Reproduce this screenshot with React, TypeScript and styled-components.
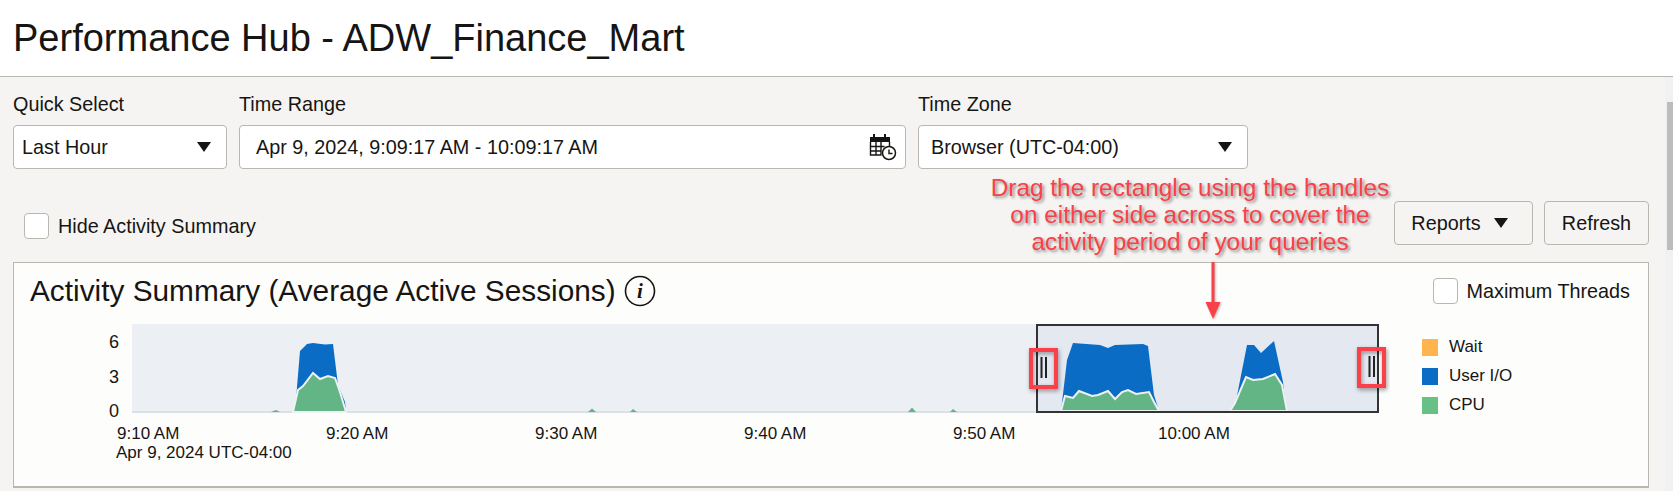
import styled, { createGlobalStyle } from 'styled-components';

const INK = '#161513';
const LINE = '#bab6b0';
const RED = '#fa4048';

const GlobalStyle = createGlobalStyle`
  html, body {
    margin: 0;
    padding: 0;
    background: #f5f4f2;
    font-family: "Liberation Sans", Arial, sans-serif;
    color: ${INK};
  }
`;

const Page = styled.div`
  width: 1673px;
  height: 491px;
  overflow: hidden;
  position: relative;
  background: #f5f4f2;
`;

const Header = styled.header`
  height: 77px;
  box-sizing: border-box;
  background: #fff;
  border-bottom: 1px solid ${LINE};
  padding: 14px 13px 0;
`;

const Title = styled.h1`
  margin: 0;
  font-size: 38px;
  line-height: 48px;
  font-weight: 400;
`;

const Body = styled.main`
  width: 1649px;
  padding: 15px 0 0 13px;
  box-sizing: border-box;
`;

const FilterRow = styled.div`
  display: flex;
  gap: 12px;
`;

const Field = styled.div<{ $width: number }>`
  width: ${p => p.$width}px;
`;

const FieldLabel = styled.label`
  display: block;
  font-size: 19.8px;
  line-height: 24px;
  margin-bottom: 9px;
`;

const InputBox = styled.div<{ $padLeft?: number; $padRight?: number }>`
  height: 44px;
  box-sizing: border-box;
  background: #fff;
  border: 1px solid ${LINE};
  border-radius: 4px;
  display: flex;
  align-items: center;
  justify-content: space-between;
  padding: 0 ${p => p.$padRight ?? 15}px 0 ${p => p.$padLeft ?? 8}px;
  font-size: 19.8px;
`;

const Caret = styled.span`
  width: 0;
  height: 0;
  flex: none;
  border-left: 7px solid transparent;
  border-right: 7px solid transparent;
  border-top: 10px solid ${INK};
`;

const ActionRow = styled.div`
  display: flex;
  align-items: center;
  margin-top: 32px;
  height: 44px;
`;

const CheckRow = styled.label`
  display: flex;
  align-items: center;
  gap: 9px;
  font-size: 19.8px;
  margin-left: 11px;
`;

const HideRow = styled(CheckRow)`
  margin-top: 6px;
`;

const CheckBox = styled.span`
  width: 25px;
  height: 26px;
  box-sizing: border-box;
  background: #fff;
  border: 1px solid ${LINE};
  border-radius: 4px;
  flex: none;
`;

const Actions = styled.div`
  display: flex;
  gap: 11px;
  margin-left: auto;
`;

const Button = styled.button<{ $width: number; $padRight?: number }>`
  width: ${p => p.$width}px;
  height: 44px;
  background: #f5f4f2;
  border: 1px solid ${LINE};
  border-radius: 4px;
  font: inherit;
  font-size: 19.8px;
  color: ${INK};
  display: flex;
  align-items: center;
  justify-content: center;
  gap: 13px;
  padding: 0 ${p => p.$padRight ?? 0}px 0 0;
`;

const Panel = styled.section`
  margin-top: 17px;
  height: 226px;
  box-sizing: border-box;
  background: #fdfdfb;
  border: 1px solid ${LINE};
  border-bottom-width: 2px;
  padding: 11px 18px 0 16px;
`;

const PanelHead = styled.div`
  display: flex;
  align-items: center;
  height: 34px;
  margin-bottom: 12px;
`;

const PanelTitle = styled.h2`
  margin: 0;
  font-size: 29.8px;
  font-weight: 400;
`;

const InfoIcon = styled.svg`
  margin-left: 8px;
  flex: none;
`;

const PanelOption = styled(CheckRow)`
  margin-left: auto;
`;

const ChartRow = styled.div`
  display: flex;
`;

const ChartSvg = styled.svg`
  display: block;
  margin-left: -30px;
  flex: none;
`;

const Legend = styled.ul`
  list-style: none;
  margin: 19px 0 0 32px;
  padding: 0;
  display: flex;
  flex-direction: column;
  gap: 13px;
`;

const LegendItem = styled.li`
  display: flex;
  align-items: center;
  gap: 11px;
  font-size: 17px;
  height: 16px;
`;

const Swatch = styled.span<{ $color: string }>`
  width: 16px;
  height: 17px;
  background: ${p => p.$color};
`;

const Callout = styled.div`
  position: absolute;
  left: 950px;
  top: 174px;
  width: 480px;
  text-align: center;
  color: ${RED};
  font-size: 24.4px;
  line-height: 27px;
  text-shadow: 2px 2px 3px rgba(0, 0, 0, 0.4);
`;

const CalloutArrow = styled.svg`
  position: absolute;
  left: 1203px;
  top: 262px;
  filter: drop-shadow(1px 1px 1px rgba(0, 0, 0, 0.3));
`;

const ScrollTrack = styled.div`
  position: absolute;
  right: 0;
  top: 77px;
  bottom: 0;
  width: 8px;
  background: #f1f1f1;
`;

const ScrollThumb = styled.div`
  margin: 25px 0 0 2px;
  height: 148px;
  background: #bdbdbd;
`;

const axisStyle = { fontFamily: '"Liberation Sans", Arial, sans-serif', fontSize: 17, fill: INK };

const X_TICKS = [
  { x: 117, label: '9:10 AM' },
  { x: 326, label: '9:20 AM' },
  { x: 535, label: '9:30 AM' },
  { x: 744, label: '9:40 AM' },
  { x: 953, label: '9:50 AM' },
  { x: 1158, label: '10:00 AM' },
];

const BLUE_AREAS = [
  '295,411 300,351 307,344 313,343 325,344.5 333,344 338,385 345,402 346,411',
  '1061,411 1067,360 1073,343 1100,345 1108,348 1115,345 1143,344 1148,346 1154,395 1159,411',
  '1234,411 1247,345 1254,345 1261,353 1274,341 1283,382 1286,411',
];

const GREEN_AREAS = [
  '293,412 298,390 303,386 313,373 320,379 328,376 335,378 340,392 346,412',
  '1061,411 1065,396 1073,398 1079,391 1092,396 1098,395 1108,391 1115,399 1122,392 1128,390 1136,394 1149,392 1154,402 1159,411',
  '1230,411 1235,403 1246,377 1253,380 1263,379 1275,374 1282,385 1287,411',
];

// tiny bumps of cpu activity along the baseline
const BLIPS = [
  '271,412 276,410 280,412',
  '588,412 592,408.5 596,412',
  '630,412 633,409 637,412',
  '908,412 912,407.5 916,412',
  '950,412 953,409 957,412',
];

function Chart() {
  // svg origin sits at page x=0 so the numbers above read as picture coordinates
  return (
    <ChartSvg width={1390} height={160} viewBox="0 320 1390 160">
      <rect x={132} y={324} width={1246} height={88} fill="#ecf0f5" />
      <rect x={1037} y={325} width={341} height={87} fill="#e4e8f1" />
      <rect x={132} y={411} width={905} height={2} fill="#dcdfe5" />
      {BLUE_AREAS.map(points => (
        <polygon key={points} points={points} fill="#0a6cc4" />
      ))}
      {GREEN_AREAS.map(points => (
        <polygon key={points} points={points} fill="#63b585" stroke="#eef2f5" strokeWidth={2} />
      ))}
      {BLIPS.map(points => (
        <polygon key={points} points={points} fill="#63b585" />
      ))}
      <rect x={1037} y={325} width={341} height={87} fill="none" stroke="#333" strokeWidth={2} />
      <text x={109} y={348} style={{ ...axisStyle, fontSize: 18 }}>6</text>
      <text x={109} y={383} style={{ ...axisStyle, fontSize: 18 }}>3</text>
      <text x={109} y={417} style={{ ...axisStyle, fontSize: 18 }}>0</text>
      {X_TICKS.map(t => (
        <text key={t.label} x={t.x} y={439} style={axisStyle}>{t.label}</text>
      ))}
      <text x={116} y={458} style={axisStyle}>Apr 9, 2024 UTC-04:00</text>
      <defs>
        <filter id="boxShadow" x="-30%" y="-30%" width="170%" height="170%">
          <feDropShadow dx={1} dy={2} stdDeviation={2} floodOpacity={0.4} />
        </filter>
      </defs>
      <Handle x={1031} y={350} />
      <Handle x={1359} y={349} />
    </ChartSvg>
  );
}

function Handle({ x, y }: { x: number; y: number }) {
  return (
    <g>
      <rect x={x} y={y} width={25} height={37} fill="none" stroke={RED} strokeWidth={4} filter="url(#boxShadow)" />
      <rect x={x + 9.5} y={y + 7} width={2} height={21} fill="#23201f" />
      <rect x={x + 14} y={y + 7} width={2} height={21} fill="#23201f" />
    </g>
  );
}

function CalendarClock() {
  return (
    <svg width="28" height="28" viewBox="0 0 28 28" fill="none">
      <rect x="1" y="4" width="20" height="5" fill={INK} />
      <rect x="4" y="1" width="2" height="5" fill={INK} />
      <rect x="15" y="1" width="2" height="5" fill={INK} />
      <path d="M1.5 9v13h11M1.5 13.5h14M1.5 18h11M7 9v13M12 9v13M20.5 9v5" stroke={INK} strokeWidth="1.4" />
      <circle cx="20" cy="20" r="6.5" fill="#fff" stroke={INK} strokeWidth="1.5" />
      <path d="M20 16.5V20.5H23.5" stroke={INK} strokeWidth="1.4" />
    </svg>
  );
}

export default function App() {
  return (
    <>
      <GlobalStyle />
      <Page>
        <Header>
          <Title>Performance Hub - ADW_Finance_Mart</Title>
        </Header>
        <Body>
          <FilterRow>
            <Field $width={214}>
              <FieldLabel>Quick Select</FieldLabel>
              <InputBox>
                Last Hour
                <Caret />
              </InputBox>
            </Field>
            <Field $width={667}>
              <FieldLabel>Time Range</FieldLabel>
              <InputBox $padLeft={16} $padRight={8}>
                Apr 9, 2024, 9:09:17 AM - 10:09:17 AM
                <CalendarClock />
              </InputBox>
            </Field>
            <Field $width={330}>
              <FieldLabel>Time Zone</FieldLabel>
              <InputBox $padLeft={12}>
                Browser (UTC-04:00)
                <Caret />
              </InputBox>
            </Field>
          </FilterRow>
          <ActionRow>
            <HideRow>
              <CheckBox />
              Hide Activity Summary
            </HideRow>
            <Actions>
              <Button $width={139} $padRight={8}>
                Reports
                <Caret />
              </Button>
              <Button $width={105}>Refresh</Button>
            </Actions>
          </ActionRow>
          <Panel>
            <PanelHead>
              <PanelTitle>Activity Summary (Average Active Sessions)</PanelTitle>
              <InfoIcon width="32" height="32" viewBox="0 0 32 32">
                <circle cx="16" cy="16" r="14.5" fill="none" stroke={INK} strokeWidth="1.6" />
                <text x="16" y="23" textAnchor="middle" fontFamily='"Liberation Serif", serif' fontStyle="italic" fontWeight="700" fontSize="21" fill={INK}>i</text>
              </InfoIcon>
              <PanelOption>
                <CheckBox />
                Maximum Threads
              </PanelOption>
            </PanelHead>
            <ChartRow>
              <Chart />
              <Legend>
                <LegendItem><Swatch $color="#ffb54d" />Wait</LegendItem>
                <LegendItem><Swatch $color="#0a6cc4" />User I/O</LegendItem>
                <LegendItem><Swatch $color="#67c084" />CPU</LegendItem>
              </Legend>
            </ChartRow>
          </Panel>
        </Body>
        <Callout>
          Drag the rectangle using the handles<br />
          on either side across to cover the<br />
          activity period of your queries
        </Callout>
        <CalloutArrow width="20" height="60" viewBox="0 0 20 60">
          <path d="M10 0V42" stroke={RED} strokeWidth="3" />
          <path d="M2.5 40H17.5L10 57Z" fill={RED} />
        </CalloutArrow>
        <ScrollTrack>
          <ScrollThumb />
        </ScrollTrack>
      </Page>
    </>
  );
}
